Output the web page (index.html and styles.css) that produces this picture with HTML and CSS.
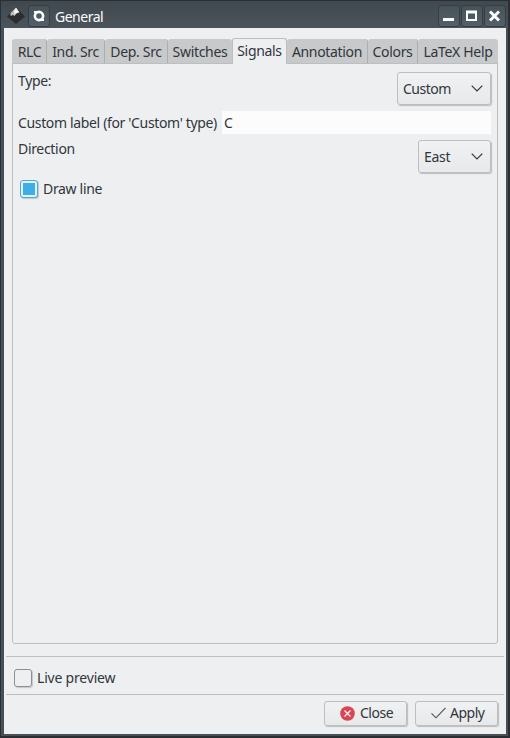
FILE: index.html
```
<!DOCTYPE html>
<html lang="en">
<head>
<meta charset="utf-8">
<title>General</title>
<link rel="stylesheet" href="styles.css">
</head>
<body>
<div class="window">
  <header class="titlebar">
    <svg class="app-icon" width="18" height="18" viewBox="0 0 18 18"><path d="M9 0 18 9.5 9 17 0 9.5Z" fill="#2b2e30"/><path d="M9 .5 12.5 5.5 9.5 6.5 7.5 9 6 8 3.5 9 3.5 6Z" fill="#bcbcbc"/><path d="M9 .5 12 5 9.5 6 7.5 7.5 7 4Z" fill="#f0f0f0"/></svg>
    <button class="tb-btn"><svg width="20" height="20" viewBox="0 0 20 20"><circle cx="10" cy="10" r="4.1" fill="none" stroke="#fcfcfc" stroke-width="2.6"/><path d="M5 5h4v2H5zM11 13h4v2h-4z" fill="#fcfcfc"/></svg></button>
    <span class="title">General</span>
    <div class="controls">
      <button class="tb-btn"><svg width="20" height="20" viewBox="0 0 20 20"><path d="M4 13.5h11" stroke="#fcfcfc" stroke-width="3"/></svg></button>
      <button class="tb-btn"><svg width="20" height="20" viewBox="0 0 20 20"><path d="M5 6h9v8H5z" fill="none" stroke="#fcfcfc" stroke-width="2"/><path d="M4 6h11" stroke="#fcfcfc" stroke-width="3"/></svg></button>
      <button class="tb-btn"><svg width="20" height="20" viewBox="0 0 20 20"><path d="M5 5.5 14 14.5M14 5.5 5 14.5" stroke="#fcfcfc" stroke-width="3"/></svg></button>
    </div>
  </header>
  <main class="content">
    <nav class="tabs">
      <span class="tab rlc">RLC</span><span class="tab ind">Ind. Src</span><span class="tab dep">Dep. Src</span><span class="tab switches">Switches</span><span class="tab signals active">Signals</span><span class="tab annotation">Annotation</span><span class="tab colors">Colors</span><span class="tab latex">LaTeX Help</span>
    </nav>
    <section class="pane">
      <div class="row type-row"><span>Type:</span>
        <button class="combo custom"><span>Custom</span><svg width="12" height="7" viewBox="0 0 12 7"><path d="M.7.7 6 6 11.3.7" fill="none" stroke="#31363b" stroke-width="1.2"/></svg></button>
      </div>
      <div class="row label-row"><span class="field-label">Custom label (for 'Custom' type)</span><span class="entry">C</span></div>
      <div class="row direction-row"><span>Direction</span>
        <button class="combo east"><span>East</span><svg width="12" height="7" viewBox="0 0 12 7"><path d="M.7.7 6 6 11.3.7" fill="none" stroke="#31363b" stroke-width="1.2"/></svg></button>
      </div>
      <div class="row check-row"><span class="box checked"></span><span>Draw line</span></div>
    </section>
    <div class="preview-row"><span class="box"></span><span class="preview-label">Live preview</span></div>
    <footer class="actions">
      <button class="action"><svg class="close-icon" width="15" height="15" viewBox="0 0 15 15"><circle cx="7.5" cy="7.5" r="7.3" fill="#da4453"/><path d="M4.5 4.5l6 6M10.5 4.5l-6 6" stroke="#fcfcfc" stroke-width="1.2"/></svg><span>Close</span></button>
      <button class="action"><svg class="apply-icon" width="15" height="12" viewBox="0 0 15 12"><path d="M.5 6.3 5 10.8 14.5.8" fill="none" stroke="#4d4d4d" stroke-width="1.1"/></svg><span>Apply</span></button>
    </footer>
  </main>
</div>
</body>
</html>
```
FILE: styles.css
```
* { box-sizing: border-box; }
body {
  margin: 0;
  font: 14px/18px "Noto Sans", sans-serif;
  letter-spacing: -0.32px;
  color: #31363b;
}
button { font: inherit; letter-spacing: inherit; color: inherit; padding: 0; margin: 0; }
svg { display: block; flex: none; }
.window {
  width: 510px;
  height: 738px;
  display: flex;
  flex-direction: column;
  background: #475057;
  border: solid #2b2f33;
  border-width: 1px 2px 2px 1px;
}
.titlebar {
  height: 27px;
  flex: none;
  display: flex;
  align-items: center;
  padding: 2px 2px 0 6px;
  background: linear-gradient(#414950, #4b545b);
  color: #fcfcfc;
}
.app-icon { margin-right: 3px; }
.tb-btn {
  width: 22px;
  height: 22px;
  border: 1px solid #363d43;
  border-radius: 3px;
  background: linear-gradient(#475259, #536067);
}
.title { margin-left: 5px; padding-top: 2px; letter-spacing: -0.5px; }
.controls { margin-left: auto; display: flex; gap: 1px; }
.content {
  flex: 1;
  margin: 0 2px 2px 3px;
  padding: 11px 8px 0;
  background: #eeeff1;
  display: flex;
  flex-direction: column;
}
.tabs { display: flex; align-items: flex-end; height: 25px; margin-bottom: -1px; }
.tab {
  height: 25px;
  flex: none;
  padding-top: 4px;
  text-align: center;
  background: #c8c9cb;
  border-right: 1px solid #acaeb0;
  border-bottom: 1px solid #bcbec0;
  border-radius: 3px 3px 0 0;
  white-space: nowrap;
}
.tab.active {
  height: 26px;
  margin-top: -1px;
  padding-top: 3px;
  background: #eeeff1;
  border: 1px solid #bcbec0;
  border-bottom: 0;
  z-index: 1;
}
.rlc { width: 35px; padding-left: 1px; }
.ind { width: 58px; }
.dep { width: 63px; }
.switches { width: 64px; border-right: 0; }
.signals { width: 55px; }
.annotation { width: 81px; }
.colors { width: 50px; }
.latex { width: 80px; border-right: 0; }
.pane {
  height: 581px;
  width: 486px;
  border: 1px solid #bcbec0;
  border-radius: 0 0 3px 3px;
  padding: 8px 6px 0 5px;
}
.row { display: flex; }
.type-row { height: 39px; justify-content: space-between; }
.label-row { height: 23px; align-items: center; margin-bottom: 1px; }
.field-label { width: 204px; white-space: nowrap; letter-spacing: -0.35px; }
.entry { flex: 1; height: 23px; padding: 3px 2px 2px; background: #fcfcfc; }
.direction-row { height: 45px; justify-content: space-between; padding-top: 5px; }
.combo {
  height: 33px;
  display: flex;
  align-items: center;
  justify-content: space-between;
  padding: 0 7px 0 5px;
  border: 1px solid #bcbec0;
  border-radius: 3px;
  background: linear-gradient(#f0f1f2, #e8e9ea);
  box-shadow: 1px 1px 1px #bbbcbd;
}
.custom { width: 94px; letter-spacing: -0.5px; }
.east { width: 73px; }
.check-row { align-items: center; padding-left: 2px; }
.box {
  width: 18px;
  height: 18px;
  margin-right: 5px;
  border: 1px solid #8c9093;
  border-radius: 3px;
  box-shadow: 1px 1px 1px #c5c7c8;
}
.checked { border-color: #3daee9; background: #3daee9 content-box; padding: 2px; }
.preview-row {
  height: 39px;
  margin: 12px -6px 0;
  padding-left: 8px;
  border: solid #bcbec0;
  border-width: 1px 0;
  display: flex;
  align-items: center;
  padding-top: 5px;
}
.preview-label { letter-spacing: -0.2px; }
.actions { display: flex; justify-content: flex-end; gap: 8px; padding-top: 6px; }
.action {
  width: 83px;
  height: 25px;
  display: flex;
  align-items: center;
  padding: 0 0 1px 15px;
  gap: 5px;
  border: 1px solid #bcbec0;
  border-radius: 3px;
  background: linear-gradient(#f0f1f2, #e8e9ea);
  box-shadow: 1px 1px 1px #bbbcbd;
  letter-spacing: -0.5px;
}
.apply-icon { margin-right: -1px; }
```
